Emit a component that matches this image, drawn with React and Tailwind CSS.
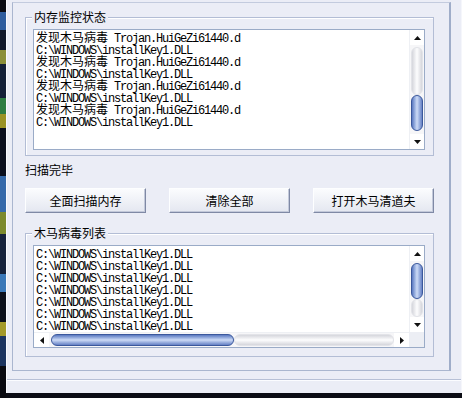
import React from 'react';

const cjk = "font-['Noto_Sans_CJK_SC',sans-serif]";
const mono = "font-['Liberation_Mono',monospace] tracking-[-1.2px]";

const FOUND = '发现木马病毒';
const TROJAN = 'Trojan.HuiGeZi61440.d';
const DLL = 'C:\\WINDOWS\\installKey1.DLL';

const LogLine = ({ cn, ascii }) => (
  <div className="h-[12px] leading-[12px] whitespace-pre text-[12px] text-black">
    {cn && <span className={cjk}>{cn}</span>}
    <span className={mono}>{cn ? ' ' + ascii : ascii}</span>
  </div>
);

const Arrow = ({ dir }) => {
  const pts = {
    up: '3.5,0 7,4 0,4',
    down: '0,0 7,0 3.5,4',
    left: '0,3.5 4,0 4,7',
    right: '0,0 4,3.5 0,7',
  }[dir];
  const vertical = dir === 'up' || dir === 'down';
  return (
    <div className="w-[15px] h-[15px] shrink-0 flex items-center justify-center bg-white">
      <svg width={vertical ? 7 : 4} height={vertical ? 4 : 7} viewBox={vertical ? '0 0 7 4' : '0 0 4 7'}>
        <polygon points={pts} fill="#111" />
      </svg>
    </div>
  );
};

// grey rounded part of the track
const TrackPill = ({ className }) => (
  <div className={`rounded-full border border-[#e2e3e8] ${className}`} />
);

// blue thumb
const Thumb = ({ className }) => (
  <div className={`rounded-full border border-[#3b589c] ${className}`} />
);

const VScroll = ({ children }) => (
  <div className="w-[15px] h-full flex flex-col bg-[#f6f6f8] border-l border-[#eef0f4]">{children}</div>
);

const ListBox = ({ children, h }) => (
  <div className={`w-[392px] ${h} border border-[#9aabc7] bg-white overflow-hidden`}>{children}</div>
);

const GroupBox = ({ label, h, children }) => (
  <div className={`relative w-[409px] ${h} border border-[#b3bdd5] shadow-[inset_1px_1px_0_#ffffff] pl-[7px] pt-[11px]`}>
    <div className={`absolute left-[6px] top-[-7px] px-[2px] bg-[#ebedf6] leading-[12px] text-[12px] text-black ${cjk}`}>
      {label}
    </div>
    {children}
  </div>
);

const Button = ({ children }) => (
  <button
    className={`w-[121px] h-[25px] flex items-center justify-center text-[12px] text-black ${cjk} bg-gradient-to-b from-[#fbfcfe] to-[#e4e7f0] border border-t-[#fdfeff] border-l-[#fdfeff] border-r-[#7f89a5] border-b-[#7f89a5] shadow-[inset_-1px_-1px_0_#c3c9da]`}
  >
    {children}
  </button>
);

const desktopBlocks = [
  ['h-[12px]', 'bg-[#0b0c14]'],
  ['h-[18px]', 'bg-[#2f5d9e]'],
  ['h-[20px]', 'bg-[#11182a]'],
  ['h-[14px]', 'bg-[#8b8f3a]'],
  ['h-[34px]', 'bg-[#142038]'],
  ['h-[16px]', 'bg-[#2e7d43]'],
  ['h-[14px]', 'bg-[#9a9326]'],
  ['h-[48px]', 'bg-[#0a0f1e]'],
  ['h-[36px]', 'bg-[#3569aa]'],
  ['h-[22px]', 'bg-[#7c8a2e]'],
  ['h-[40px]', 'bg-[#16223c]'],
  ['h-[18px]', 'bg-[#3b78b8]'],
  ['h-[30px]', 'bg-[#0c101c]'],
  ['h-[14px]', 'bg-[#a49a2a]'],
  ['h-[30px]', 'bg-[#1d3560]'],
  ['h-[32px]', 'bg-[#090a10]'],
];

export default function App() {
  const monitorLines = [];
  for (let i = 0; i < 4; i++) {
    monitorLines.push(<LogLine key={'a' + i} cn={FOUND} ascii={TROJAN} />);
    monitorLines.push(<LogLine key={'b' + i} ascii={DLL} />);
  }
  const virusLines = Array.from({ length: 7 }, (_, i) => <LogLine key={i} ascii={DLL} />);

  return (
    <div className={`w-[462px] h-[398px] overflow-hidden flex bg-[#0b0c14] ${cjk}`}>
      {/* desktop behind the window */}
      <div className="w-[6px] h-full flex flex-col">
        {desktopBlocks.map(([h, c], i) => (
          <div key={i} className={`${h} ${c} shrink-0`} />
        ))}
      </div>

      <div className="w-[456px] h-full flex flex-col">
        <div className="h-[393px] flex flex-col bg-[#ebedf6] border-l border-[#fafbff] border-r border-r-[#f5f6fb]">
          {/* tab page */}
          <div className="ml-[5px] mt-[2px] w-[439px] h-[369px] border border-[#aab6cf] border-r-2 border-r-[#9fadc9] border-t-[#c3cbde] pl-[12px] pt-[14px] flex flex-col">
            <GroupBox label="内存监控状态" h="h-[139px]">
              <ListBox h="h-[121px]">
                <div className="flex h-full">
                  <div className="flex-1 pl-[2px] pt-[1px]">{monitorLines}</div>
                  <VScroll>
                    <Arrow dir="up" />
                    <div className="flex-1 flex flex-col px-[1px]">
                      <TrackPill className="mt-[2px] h-[48px] bg-gradient-to-r from-[#d5d6dc] via-[#fdfdfe] to-[#d5d6dc]" />
                      <Thumb className="h-[36px] bg-gradient-to-r from-[#5a78c0] via-[#cddbf6] to-[#6580c4]" />
                    </div>
                    <Arrow dir="down" />
                  </VScroll>
                </div>
              </ListBox>
            </GroupBox>

            <div className="mt-[7px] h-[14px] leading-[14px] text-[12px] text-black">扫描完毕</div>

            <div className="mt-[11px] w-[409px] flex justify-between">
              <Button>全面扫描内存</Button>
              <Button>清除全部</Button>
              <Button>打开木马清道夫</Button>
            </div>

            <div className="mt-[20px]">
              <GroupBox label="木马病毒列表" h="h-[124px]">
                <ListBox h="h-[103px]">
                  <div className="flex flex-col h-full">
                    <div className="flex h-[86px]">
                      <div className="flex-1 pl-[2px] pt-[1px] overflow-hidden">
                        {virusLines}
                        <div className="h-[2px] flex gap-[6px] pl-[1px] pt-[1px]">
                          <div className="w-[1px] h-[1px] bg-black" />
                          <div className="w-[1px] h-[1px] bg-black" />
                          <div className="w-[1px] h-[1px] bg-black" />
                        </div>
                      </div>
                      <VScroll>
                        <Arrow dir="up" />
                        <div className="flex-1 flex flex-col px-[1px]">
                          <Thumb className="mt-[2px] h-[36px] bg-gradient-to-r from-[#5a78c0] via-[#cddbf6] to-[#6580c4]" />
                          <TrackPill className="h-[18px] bg-gradient-to-r from-[#d5d6dc] via-[#fdfdfe] to-[#d5d6dc]" />
                        </div>
                        <Arrow dir="down" />
                      </VScroll>
                    </div>
                    <div className="flex h-[15px]">
                      <div className="flex-1 flex bg-[#f6f6f8] border-t border-[#eef0f4]">
                        <Arrow dir="left" />
                        <div className="flex-1 flex py-[1px] pl-[2px]">
                          <Thumb className="w-[183px] bg-gradient-to-b from-[#5a78c0] via-[#cddbf6] to-[#6580c4]" />
                          <TrackPill className="flex-1 bg-gradient-to-b from-[#d5d6dc] via-[#fdfdfe] to-[#d5d6dc]" />
                        </div>
                        <Arrow dir="right" />
                      </div>
                      <div className="w-[15px] bg-[#eceef4]" />
                    </div>
                  </div>
                </ListBox>
              </GroupBox>
            </div>
          </div>

          {/* status strip */}
          <div className="mt-[8px] h-[1px] bg-[#b7c0d6]" />
          <div className="flex-1 border-t border-[#fbfcff]" />
        </div>
        <div className="flex-1 bg-[#0b0c14]" />
      </div>
    </div>
  );
}
